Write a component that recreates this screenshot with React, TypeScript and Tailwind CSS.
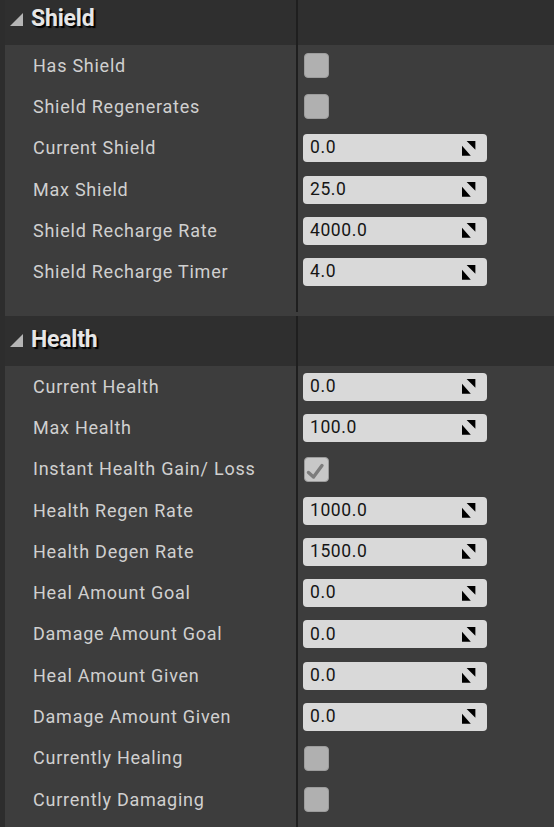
import React from 'react';

type Field =
  | { label: string; kind: 'bool'; checked?: boolean }
  | { label: string; kind: 'num'; value: string };

const shieldFields: Field[] = [
  { label: 'Has Shield', kind: 'bool' },
  { label: 'Shield Regenerates', kind: 'bool' },
  { label: 'Current Shield', kind: 'num', value: '0.0' },
  { label: 'Max Shield', kind: 'num', value: '25.0' },
  { label: 'Shield Recharge Rate', kind: 'num', value: '4000.0' },
  { label: 'Shield Recharge Timer', kind: 'num', value: '4.0' },
];

const healthFields: Field[] = [
  { label: 'Current Health', kind: 'num', value: '0.0' },
  { label: 'Max Health', kind: 'num', value: '100.0' },
  { label: 'Instant Health Gain/ Loss', kind: 'bool', checked: true },
  { label: 'Health Regen Rate', kind: 'num', value: '1000.0' },
  { label: 'Health Degen Rate', kind: 'num', value: '1500.0' },
  { label: 'Heal Amount Goal', kind: 'num', value: '0.0' },
  { label: 'Damage Amount Goal', kind: 'num', value: '0.0' },
  { label: 'Heal Amount Given', kind: 'num', value: '0.0' },
  { label: 'Damage Amount Given', kind: 'num', value: '0.0' },
  { label: 'Currently Healing', kind: 'bool' },
  { label: 'Currently Damaging', kind: 'bool' },
];

const SpinIcon = () => (
  <svg width="14" height="15" viewBox="0 0 14 15" className="shrink-0">
    <polygon points="4.6,0 13.4,0 13.4,8.7" fill="#000" />
    <polygon points="0,4.8 0,14.8 8.8,14.8" fill="#000" />
  </svg>
);

const CheckBox = ({ checked }: { checked?: boolean }) => (
  <div
    className={`w-[25px] h-[25px] rounded-[4px] border border-[#9c9c9c] flex items-center justify-center ${
      checked ? 'bg-[#c8c8c8]' : 'bg-[#b0b0b0]'
    }`}
  >
    {checked && (
      <svg width="23" height="23" viewBox="0 0 23 23">
        <polyline
          points="3.5,14.5 8.5,19 17,7.5"
          fill="none"
          stroke="#7d7d7d"
          strokeWidth="3.4"
          strokeLinecap="round"
          strokeLinejoin="round"
        />
      </svg>
    )}
  </div>
);

const NumBox = ({ value }: { value: string }) => (
  <div className="w-[184px] h-[28px] rounded-[4px] bg-[#d9d9d9] flex items-center justify-between pl-[7px] pr-[11px]">
    <span className="text-[17.5px] tracking-[0.6px] text-[#151515] leading-none">{value}</span>
    <SpinIcon />
  </div>
);

const Divider = () => <div className="w-[2px] self-stretch bg-[#1f1f1f] shrink-0" />;

const Header = ({ title, first }: { title: string; first?: boolean }) => (
  <div className={`flex h-[50px] bg-[#2f2f2f] shrink-0 ${first ? 'mt-[-5px]' : ''}`}>
    <div className="w-[291px] flex items-center pl-[5px] pb-[3px]">
      <svg width="13" height="13" viewBox="0 0 13 13" className="mt-[2px]">
        <polygon points="13,0 13,13 0,13" fill="#b5b5b5" />
      </svg>
      <span className="ml-[8px] text-[23px] font-bold tracking-[-0.2px] text-[#e6e6e6] leading-none [text-shadow:2px_2px_1px_#000]">
        {title}
      </span>
    </div>
    <Divider />
    <div className="flex-1" />
  </div>
);

const Row = ({ field }: { field: Field }) => (
  <div className="flex h-[41.3px] shrink-0">
    <div className="w-[291px] flex items-center pl-[28px] text-[18px] tracking-[0.75px] text-[#d0d0d0] leading-none">
      {field.label}
    </div>
    <Divider />
    <div className="flex-1 flex items-center pl-[5px]">
      {field.kind === 'bool' ? (
        <div className="pl-[1px]">
          <CheckBox checked={field.checked} />
        </div>
      ) : (
        <NumBox value={field.value} />
      )}
    </div>
  </div>
);

export default function App() {
  return (
    <div
      className="w-[554px] h-[827px] overflow-hidden bg-[#3d3d3d] flex"
      style={{ fontFamily: 'Roboto, "Noto Sans", sans-serif' }}
    >
      <div className="w-[5px] shrink-0 bg-[#2d2d2d]" />
      <div className="flex-1 flex flex-col">
        <Header title="Shield" first />
        {shieldFields.map((f) => (
          <Row key={f.label} field={f} />
        ))}
        <div className="flex h-[19.2px] shrink-0">
          <div className="w-[291px]" />
          <Divider />
        </div>
        <div className="h-[4px] shrink-0" />
        <Header title="Health" />
        {healthFields.map((f) => (
          <Row key={f.label} field={f} />
        ))}
        <div className="flex flex-1">
          <div className="w-[291px]" />
          <Divider />
        </div>
      </div>
    </div>
  );
}
